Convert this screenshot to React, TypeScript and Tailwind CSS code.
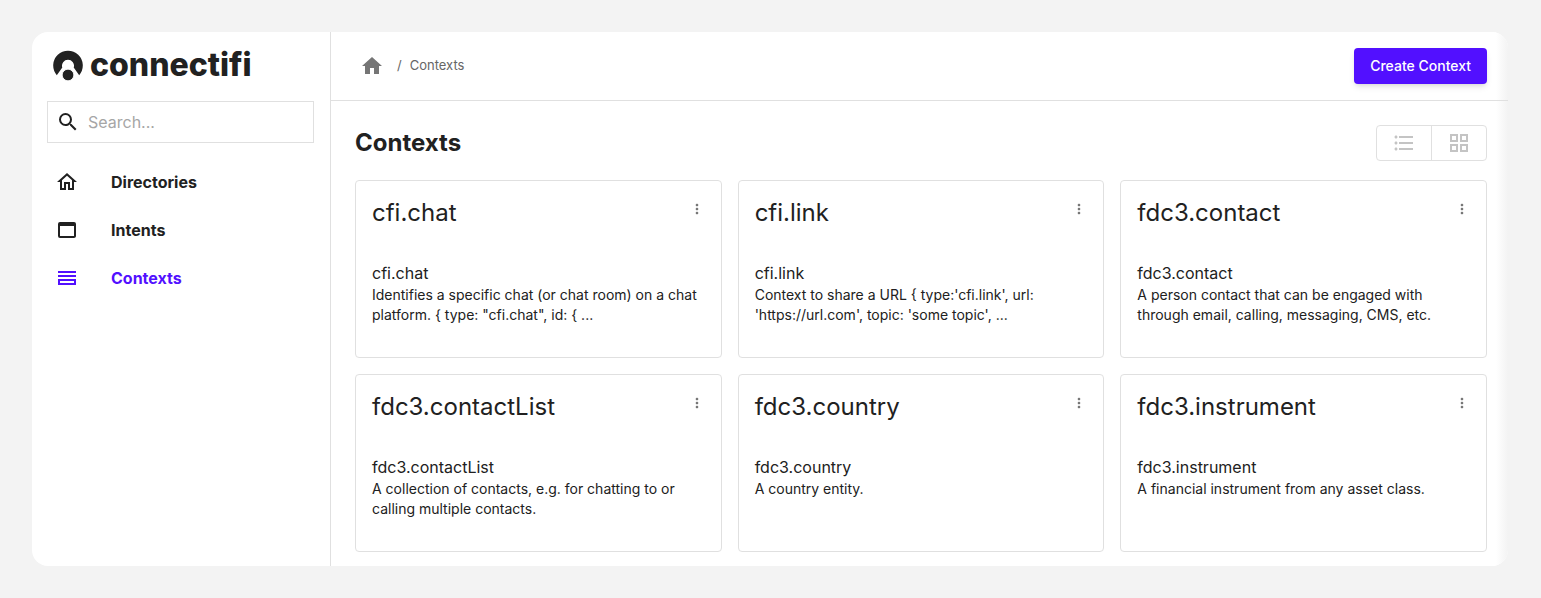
import React from "react";
import {
  MdFormatListBulleted,
  MdHome,
  MdMoreVert,
  MdOutlineGridView,
  MdOutlineHome,
  MdOutlineHorizontalSplit,
  MdSearch,
  MdWebAsset,
} from "react-icons/md";

type Context = { name: string; description: string };

const contexts: Context[] = [
  {
    name: "cfi.chat",
    description: 'Identifies a specific chat (or chat room) on a chat platform. { type: "cfi.chat", id: { ...',
  },
  {
    name: "cfi.link",
    description: "Context to share a URL { type:'cfi.link', url: 'https://url.com', topic: 'some topic', ...",
  },
  {
    name: "fdc3.contact",
    description: "A person contact that can be engaged with through email, calling, messaging, CMS, etc.",
  },
  {
    name: "fdc3.contactList",
    description: "A collection of contacts, e.g. for chatting to or calling multiple contacts.",
  },
  { name: "fdc3.country", description: "A country entity." },
  { name: "fdc3.instrument", description: "A financial instrument from any asset class." },
];

const navItems = [
  { label: "Directories", Icon: MdOutlineHome, active: false },
  { label: "Intents", Icon: MdWebAsset, active: false },
  { label: "Contexts", Icon: MdOutlineHorizontalSplit, active: true },
];

function Logo() {
  return (
    <a href="#" className="flex h-9 items-center gap-1.5 pl-[5px]">
      <svg viewBox="0 0 32 32" className="size-8 shrink-0" aria-hidden="true">
        <path
          d="M4.8 26.2A14.8 14.8 0 1 1 27.2 26.2L21.7 18.6A6 6 0 1 0 10.3 18.6Z"
          fill="#222"
        />
        <circle cx="16" cy="26" r="5.8" fill="#222" stroke="#fff" strokeWidth="0.8" />
      </svg>
      <span className="font-['Inter',sans-serif] text-[32px] leading-9 font-extrabold">connectifi</span>
    </a>
  );
}

function Sidebar() {
  return (
    <aside className="w-[299px] shrink-0 border-r border-[#e0e0e0] pt-[15px] pr-4 pl-[15px]">
      <Logo />
      <label className="mt-[18px] flex h-[42px] items-center gap-2 border border-[#e0e0e0] pl-2">
        <MdSearch className="size-6 shrink-0" />
        <input
          type="text"
          aria-label="Search"
          placeholder="Search..."
          className="w-full min-w-0 bg-transparent text-base outline-none placeholder:text-[#a6a6a6]"
        />
      </label>
      <nav className="mt-[15px]">
        {navItems.map(({ label, Icon, active }) => (
          <a
            key={label}
            href="#"
            aria-current={active ? "page" : undefined}
            className={`flex h-12 items-center gap-8 pl-2 text-base font-bold ${active ? "text-[#5210ff]" : ""}`}
          >
            <Icon className="size-6" />
            {label}
          </a>
        ))}
      </nav>
    </aside>
  );
}

function ContextCard({ name, description }: Context) {
  return (
    <article className="h-[178px] rounded border border-[#e0e0e0] px-4 pt-4">
      <div className="flex items-start justify-between">
        <h2 className="text-2xl leading-8">{name}</h2>
        <button type="button" aria-label={`Options for ${name}`} className="mt-1 text-[#757575]">
          <MdMoreVert className="size-4" />
        </button>
      </div>
      <h3 className="mt-8 text-base leading-6">{name}</h3>
      <p className="text-sm leading-5">{description}</p>
    </article>
  );
}

export default function App() {
  return (
    <div className="min-h-screen bg-[#f3f3f3] py-8 pr-[33px] pl-8 font-['Inter',sans-serif] text-[#212121]">
      <div className="flex min-h-[534px] overflow-hidden rounded-2xl bg-white">
        <Sidebar />
        <main className="min-w-0 flex-1 bg-linear-to-l from-[#f3f3f3] to-white to-[12px]">
          <header className="flex h-[69px] items-center justify-between border-b border-[#e0e0e0] pr-[21px] pl-[29px]">
            <nav aria-label="Breadcrumb" className="flex items-center text-[13px] text-[#666]">
              <a href="#" aria-label="Home">
                <MdHome className="size-6 text-[#757575]" />
              </a>
              <span className="mr-2 ml-[13px]">/</span>
              <span>Contexts</span>
            </nav>
            <button
              type="button"
              className="h-9 rounded bg-[#5210ff] px-4 text-sm font-medium text-white shadow-md"
            >
              Create Context
            </button>
          </header>
          <div className="pt-6 pr-[21px] pb-3.5 pl-6">
            <div className="flex items-center justify-between">
              <h1 className="text-2xl font-bold">Contexts</h1>
              <div className="flex h-9 rounded border border-[#e0e0e0] text-[#c4c4c4]">
                <button type="button" aria-label="List view" className="flex w-[55px] items-center justify-center border-r border-[#e0e0e0]">
                  <MdFormatListBulleted className="size-6" />
                </button>
                <button type="button" aria-label="Grid view" className="flex w-[54px] items-center justify-center">
                  <MdOutlineGridView className="size-6" />
                </button>
              </div>
            </div>
            <div className="mt-[19px] grid grid-cols-3 gap-4">
              {contexts.map((context) => (
                <ContextCard key={context.name} {...context} />
              ))}
            </div>
          </div>
        </main>
      </div>
    </div>
  );
}
